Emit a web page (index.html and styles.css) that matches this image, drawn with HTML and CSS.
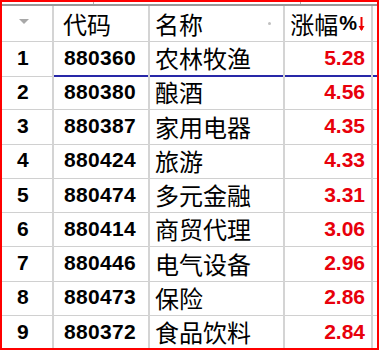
FILE: index.html
```html
<!DOCTYPE html>
<html>
<head>
<meta charset="utf-8">
<link rel="stylesheet" href="styles.css">
</head>
<body>
<div class="frame">
  <div class="strip"><span class="tick t1"></span><span class="tick t2"></span></div>
  <div class="table">
    <div class="row head">
      <div class="c c1"><span class="tri"></span></div>
      <div class="c c2 hz">代码</div>
      <div class="c c3 hz">名称<span class="dot"></span></div>
      <div class="c c4 hz">涨幅<b class="pct">%</b><svg class="arrow" width="7" height="16" viewBox="0 0 7 16"><path d="M3.5 1V14" stroke="#e00" stroke-width="2"/><path d="M0.5 10L3.5 15L6.5 10Z" fill="#e00"/></svg></div>
      <div class="c c5"></div>
    </div>
    <div class="row sel">
      <div class="c c1 num">1</div><div class="c c2 num">880360</div><div class="c c3 zh">农林牧渔</div><div class="c c4 val">5.28</div><div class="c c5"></div>
    </div>
    <div class="row">
      <div class="c c1 num">2</div><div class="c c2 num">880380</div><div class="c c3 zh">酿酒</div><div class="c c4 val">4.56</div><div class="c c5"></div>
    </div>
    <div class="row">
      <div class="c c1 num">3</div><div class="c c2 num">880387</div><div class="c c3 zh">家用电器</div><div class="c c4 val">4.35</div><div class="c c5"></div>
    </div>
    <div class="row">
      <div class="c c1 num">4</div><div class="c c2 num">880424</div><div class="c c3 zh">旅游</div><div class="c c4 val">4.33</div><div class="c c5"></div>
    </div>
    <div class="row">
      <div class="c c1 num">5</div><div class="c c2 num">880474</div><div class="c c3 zh">多元金融</div><div class="c c4 val">3.31</div><div class="c c5"></div>
    </div>
    <div class="row">
      <div class="c c1 num">6</div><div class="c c2 num">880414</div><div class="c c3 zh">商贸代理</div><div class="c c4 val">3.06</div><div class="c c5"></div>
    </div>
    <div class="row">
      <div class="c c1 num">7</div><div class="c c2 num">880446</div><div class="c c3 zh">电气设备</div><div class="c c4 val">2.96</div><div class="c c5"></div>
    </div>
    <div class="row">
      <div class="c c1 num">8</div><div class="c c2 num">880473</div><div class="c c3 zh">保险</div><div class="c c4 val">2.86</div><div class="c c5"></div>
    </div>
    <div class="row last">
      <div class="c c1 num">9</div><div class="c c2 num">880372</div><div class="c c3 zh">食品饮料</div><div class="c c4 val">2.84</div><div class="c c5"></div>
    </div>
  </div>
</div>
</body>
</html>
```
FILE: styles.css
```css
html, body {
  margin: 0;
  padding: 0;
  background: #fff;
}
.frame {
  width: 379px;
  height: 350px;
  box-sizing: border-box;
  border: 2px solid #f00;
  display: flex;
  flex-direction: column;
  overflow: hidden;
}
.strip {
  height: 2px;
  display: flex;
  flex: none;
}
.tick {
  width: 1px;
  height: 2px;
  background: #b0b0b0;
}
.t1 { margin-left: 91px; }
.t2 { margin-left: 206px; }
.table {
  border-top: 2px solid #999;
  display: flex;
  flex-direction: column;
}
.row {
  display: grid;
  grid-template-columns: 52px 96px 135px 88px 1fr;
  height: 34.25px;
  flex: none;
}
.head { height: 34px; }
.c {
  box-sizing: border-box;
  border-bottom: 1px solid #d0d0d0;
  border-right: 2px solid #d4d4d4;
  display: flex;
  align-items: center;
  white-space: nowrap;
  color: #000;
}
.c5 { border-right: none; }
.sel .c2, .sel .c3, .sel .c4, .sel .c5 {
  border-bottom: 2px solid #2828a8;
}
.c1 { padding-left: 15px; }
.c2 { padding-left: 10px; }
.c3 { padding-left: 5px; }
.c4 { justify-content: flex-end; padding-right: 6px; }
.hz, .zh {
  font-family: "Noto Sans CJK SC", sans-serif;
  font-size: 24px;
  font-weight: 400;
}
.head .c2 { padding-left: 9px; }
.num {
  font-family: "Liberation Sans", Arial, sans-serif;
  font-weight: 700;
  font-size: 21px;
  letter-spacing: 0.3px;
}
.val {
  font-family: "Liberation Sans", Arial, sans-serif;
  font-weight: 700;
  font-size: 21px;
  color: #e8000b;
}
.pct {
  font-family: "Liberation Sans", Arial, sans-serif;
  font-weight: 700;
  font-size: 20px;
  margin-left: 1px;
}
.arrow { margin-left: 1px; }
.tri {
  width: 0;
  height: 0;
  border-left: 5px solid transparent;
  border-right: 5px solid transparent;
  border-top: 5px solid #a8a8a8;
  margin-left: 2px;
  margin-top: -4px;
}
.dot {
  width: 3px;
  height: 3px;
  border-radius: 50%;
  background: #c0c0c0;
  margin-left: auto;
  margin-right: 12px;
}
```
